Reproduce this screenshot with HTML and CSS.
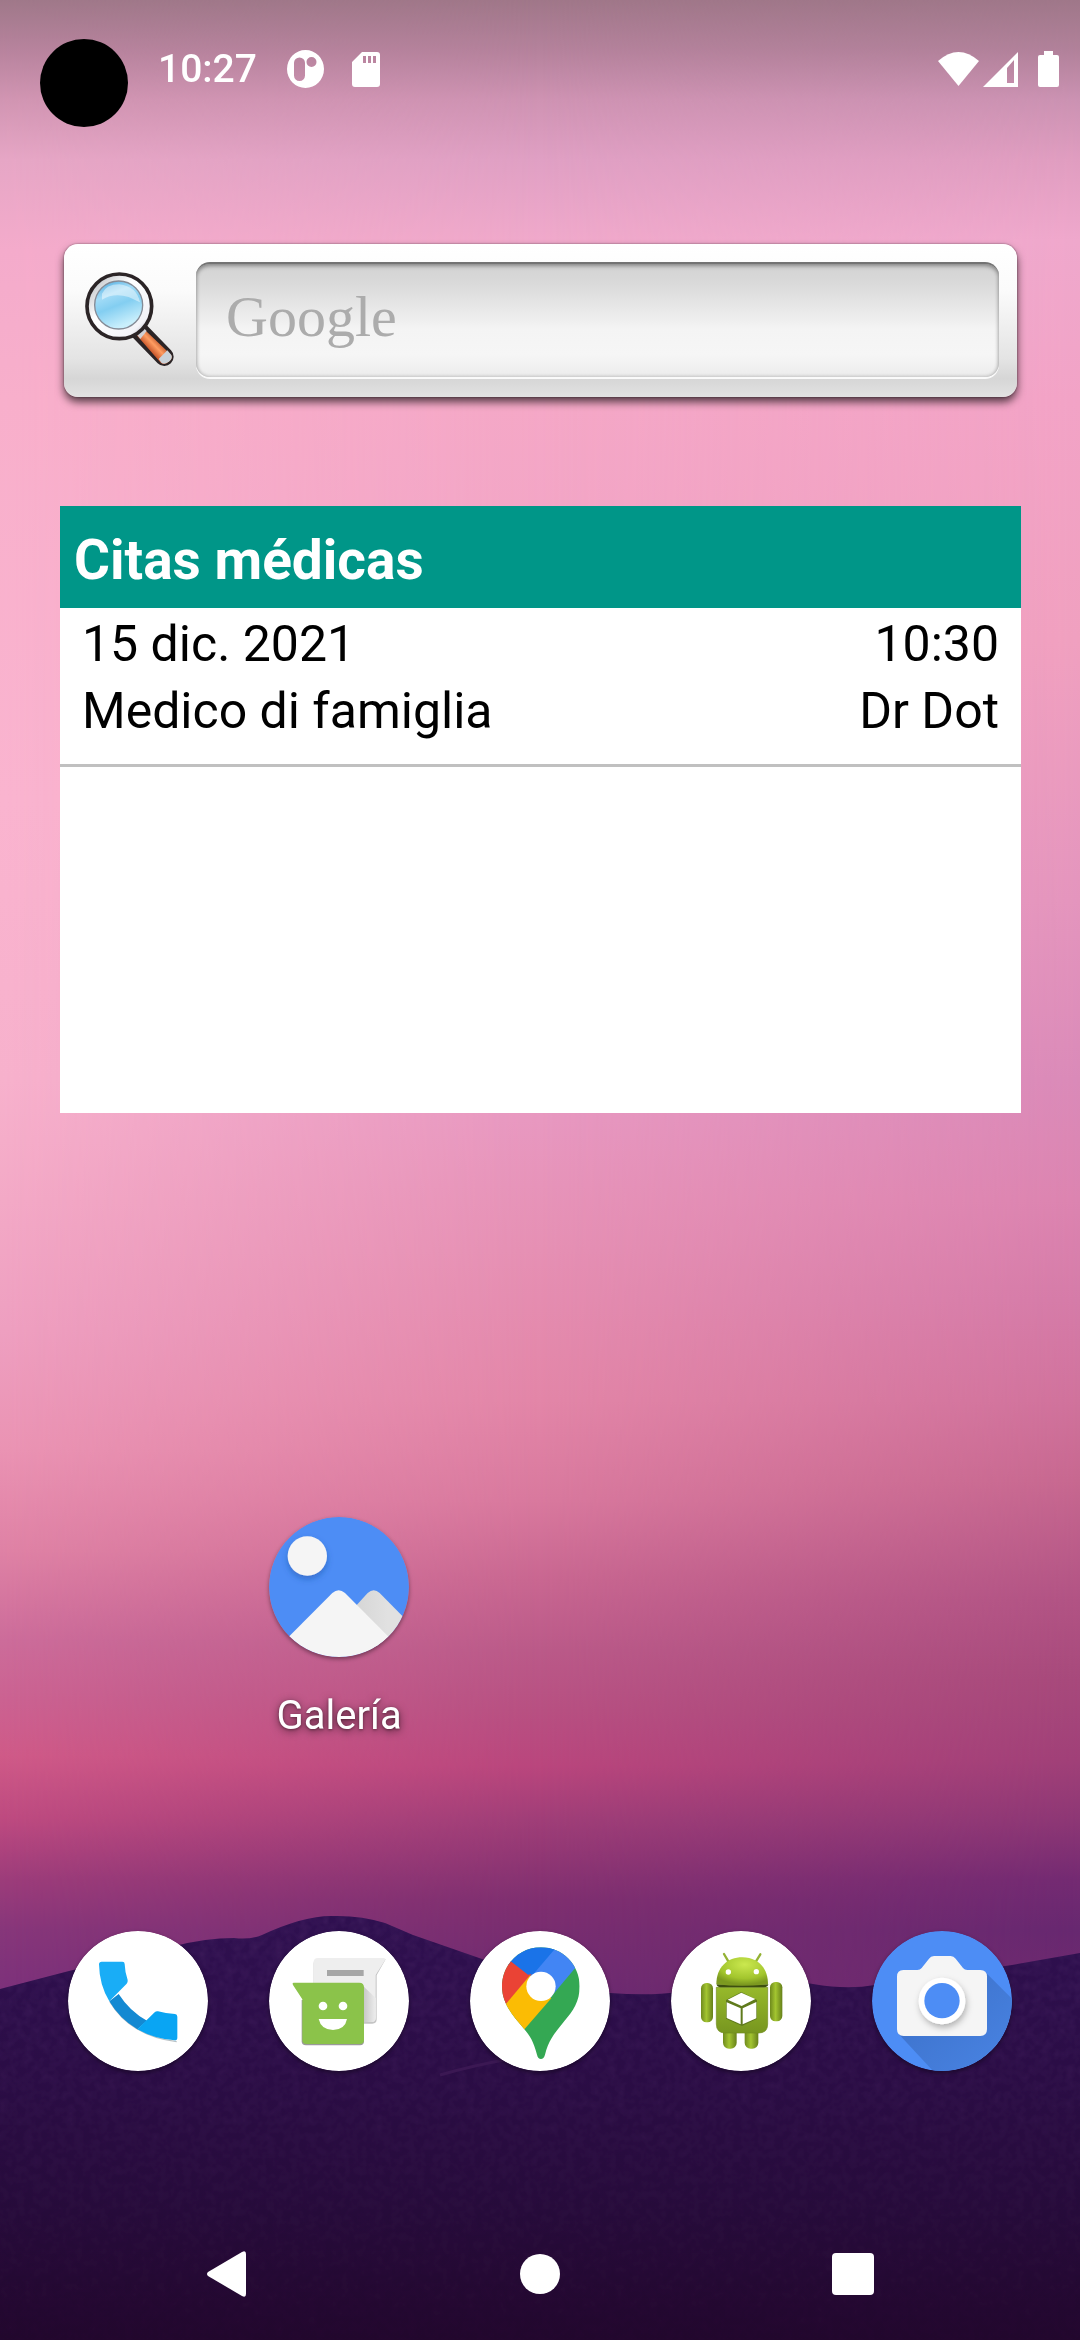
FILE: index.html
```html
<!DOCTYPE html>
<html lang="es">
<head>
<meta charset="utf-8">
<meta name="viewport" content="width=device-width, initial-scale=1">
<title>Inicio</title>
<link rel="stylesheet" href="styles.css">
</head>
<body>
<svg class="wallpaper" viewBox="0 0 1080 2340" preserveAspectRatio="none" aria-hidden="true">
  <defs>
    <linearGradient id="skyLeft" gradientUnits="userSpaceOnUse" x1="0" y1="0" x2="0" y2="2000">
      <stop offset="0" stop-color="#9f7889"/><stop offset=".025" stop-color="#b7839d"/><stop offset=".05" stop-color="#d195b2"/><stop offset=".08" stop-color="#e6a6c5"/><stop offset=".125" stop-color="#f4abcb"/><stop offset=".2" stop-color="#f8afcb"/><stop offset=".4" stop-color="#fab4cf"/><stop offset=".54" stop-color="#f7b1cc"/><stop offset=".6" stop-color="#f3a9c6"/><stop offset=".665" stop-color="#ee9fc0"/><stop offset=".725" stop-color="#ea93b3"/><stop offset=".775" stop-color="#df82a5"/><stop offset=".82" stop-color="#cc6c9a"/><stop offset=".85" stop-color="#cb6291"/><stop offset=".878" stop-color="#cf5a88"/><stop offset=".91" stop-color="#bd4a80"/><stop offset=".94" stop-color="#9c3c7a"/><stop offset=".965" stop-color="#87367a"/><stop offset="1" stop-color="#7a307a"/>
    </linearGradient>
    <linearGradient id="skyMiddle" gradientUnits="userSpaceOnUse" x1="0" y1="0" x2="0" y2="2000">
      <stop offset="0" stop-color="#a07789"/><stop offset=".025" stop-color="#b5829c"/><stop offset=".05" stop-color="#cf93b3"/><stop offset=".08" stop-color="#e0a0c4"/><stop offset=".12" stop-color="#f0a9cb"/><stop offset=".2" stop-color="#f5a8c7"/><stop offset=".4" stop-color="#efa0c4"/><stop offset=".56" stop-color="#e898c0"/><stop offset=".625" stop-color="#e690b4"/><stop offset=".7" stop-color="#e386a8"/><stop offset=".75" stop-color="#d9799e"/><stop offset=".79" stop-color="#c96791"/><stop offset=".825" stop-color="#bb5a89"/><stop offset=".855" stop-color="#b85082"/><stop offset=".883" stop-color="#ba467d"/><stop offset=".91" stop-color="#a03e78"/><stop offset=".95" stop-color="#7f2f70"/><stop offset="1" stop-color="#6b2a70"/>
    </linearGradient>
    <linearGradient id="skyRight" gradientUnits="userSpaceOnUse" x1="0" y1="0" x2="0" y2="2000">
      <stop offset="0" stop-color="#9f7789"/><stop offset=".025" stop-color="#b1819a"/><stop offset=".05" stop-color="#cb92b2"/><stop offset=".08" stop-color="#e09dc0"/><stop offset=".12" stop-color="#efa8cc"/><stop offset=".2" stop-color="#f2a3c6"/><stop offset=".32" stop-color="#f0a0bf"/><stop offset=".45" stop-color="#e495bd"/><stop offset=".54" stop-color="#da8ab8"/><stop offset=".6" stop-color="#dc84b0"/><stop offset=".65" stop-color="#d57ba8"/><stop offset=".7" stop-color="#d0729c"/><stop offset=".74" stop-color="#c76890"/><stop offset=".8" stop-color="#b15384"/><stop offset=".84" stop-color="#a7497b"/><stop offset=".88" stop-color="#a04078"/><stop offset=".91" stop-color="#8d3775"/><stop offset=".94" stop-color="#732a72"/><stop offset=".965" stop-color="#672870"/><stop offset="1" stop-color="#702a6e"/>
    </linearGradient>
    <linearGradient id="fadeOut"><stop offset="0" stop-color="#fff"/><stop offset="1" stop-color="#fff" stop-opacity="0"/></linearGradient>
    <linearGradient id="fadeIn"><stop offset="0" stop-color="#fff" stop-opacity="0"/><stop offset="1" stop-color="#fff"/></linearGradient>
    <mask id="maskLeft" maskUnits="userSpaceOnUse" x="0" y="0" width="540" height="2340"><rect width="540" height="2340" fill="url(#fadeOut)"/></mask>
    <mask id="maskRight" maskUnits="userSpaceOnUse" x="540" y="0" width="540" height="2340"><rect x="540" width="540" height="2340" fill="url(#fadeIn)"/></mask>
    <linearGradient id="hills" gradientUnits="userSpaceOnUse" x1="0" y1="1916" x2="0" y2="2340">
      <stop offset="0" stop-color="#2f1050"/><stop offset=".35" stop-color="#2b0d46"/><stop offset=".7" stop-color="#260b3a"/><stop offset="1" stop-color="#22072d"/>
    </linearGradient>
    <filter id="grain" x="0" y="0" width="1" height="1">
      <feTurbulence type="fractalNoise" baseFrequency=".12" numOctaves="2" seed="4"/>
      <feColorMatrix values="0 0 0 0 .3  0 0 0 0 .12  0 0 0 0 .4  .9 0 0 0 -.3"/>
      <feComposite in2="SourceGraphic" operator="in"/>
    </filter>
    <linearGradient id="grainFade" x1="0" y1="0" x2="0" y2="1"><stop offset="0" stop-color="#fff" stop-opacity=".22"/><stop offset="1" stop-color="#fff" stop-opacity=".03"/></linearGradient>
    <path id="ridge" d="M0 1989L69 1971L175 1946Q206 1938 234 1938Q250 1940 262 1935Q303 1916 331 1916Q360 1915 385 1923L413 1935L482 1959Q550 1990 610 1993Q650 1996 678 1992Q740 1972 813 1984Q847 1990 875 1985L1012 1965L1080 1953V2340H0Z"/>
  </defs>
  <rect width="1080" height="2340" fill="url(#skyMiddle)"/>
  <rect width="540" height="2340" fill="url(#skyLeft)" mask="url(#maskLeft)"/>
  <rect x="540" width="540" height="2340" fill="url(#skyRight)" mask="url(#maskRight)"/>
  <use href="#ridge" fill="url(#hills)"/>
  <use href="#ridge" fill="url(#grainFade)" filter="url(#grain)"/>
  <path d="M440 2075Q475 2065 510 2059" fill="none" stroke="#3b1853" stroke-width="3"/>
</svg>

<div class="phone">
  <header class="status">
    <span class="cutout"></span>
    <div class="status-group">
      <time class="clock" datetime="10:27">10:27</time>
      <svg width="37" height="38" viewBox="0 0 37 38" aria-hidden="true"><path fill="#fff" fill-rule="evenodd" d="M18.500 0a18.500 19 0 1 0 0 38a18.500 19 0 1 0 0-38ZM12.500 7.500a5.500 5.500 0 0 1 5.500 5.500v12.500a5.500 5.500 0 0 1-11 0V13a5.500 5.500 0 0 1 5.500-5.500ZM24.500 7a5 5 0 1 1 0 10a5 5 0 1 1 0-10Z"/></svg>
      <svg width="28" height="35" viewBox="0 0 28 35" aria-hidden="true"><path fill="#fff" fill-rule="evenodd" d="M10 0H25Q28 0 28 3V32Q28 35 25 35H3Q0 35 0 32V10ZM11 4V11H14V4ZM16 4V11H19V4ZM21 4V11H24V4Z"/></svg>
    </div>
    <div class="status-group status-end">
      <svg width="41" height="34" viewBox="0 0 41 34" aria-hidden="true"><path fill="#fff" d="M0 9Q20.500-9 41 9L20.500 34Z"/></svg>
      <svg width="35" height="35" viewBox="0 0 35 35" aria-hidden="true"><path fill="#fff" fill-rule="evenodd" d="M35 0V35H0ZM24 16V31H31V8Z"/></svg>
      <svg class="battery" width="21" height="36" viewBox="0 0 21 36" aria-hidden="true"><path fill="#fff" d="M6 0H15V4H19Q21 4 21 6V34Q21 36 19 36H2Q0 36 0 34V6Q0 4 2 4H6Z"/></svg>
    </div>
  </header>

  <main class="desk">
    <form class="search">
      <label class="search-icon" for="query" aria-label="Buscar">
        <svg width="92" height="98" viewBox="134 154 276 294" aria-hidden="true">
          <defs>
            <linearGradient id="lens" x1="0" y1="0" x2=".4" y2="1"><stop offset="0" stop-color="#3fa3dc"/><stop offset=".35" stop-color="#a4dcf7"/><stop offset=".6" stop-color="#83cef1"/><stop offset="1" stop-color="#c9effc"/></linearGradient>
            <linearGradient id="ring" x1="0" y1="0" x2="1" y2="1"><stop offset="0" stop-color="#aeb2b8"/><stop offset=".4" stop-color="#fff"/><stop offset=".8" stop-color="#f3f3f8"/><stop offset="1" stop-color="#85869a"/></linearGradient>
            <linearGradient id="grip" gradientUnits="userSpaceOnUse" x1="325" y1="395" x2="365" y2="357"><stop offset="0" stop-color="#b8421b"/><stop offset=".5" stop-color="#ff9d62"/><stop offset="1" stop-color="#a63c18"/></linearGradient>
          </defs>
          <path d="M300 334L375 411" stroke="#2b2426" stroke-width="56" stroke-linecap="round"/>
          <path d="M308 323L395 405Q402 414 390 425Q376 438 364 429L289 343Z" fill="url(#grip)"/>
          <path d="M289 340L308 320L322 334L303 358Z" fill="#cfd0d6"/>
          <path d="M358 418L384 392L396 406Q401 415 390 425Q376 437 366 429Z" fill="#c9d2d9"/>
          <circle cx="240" cy="260" r="97" fill="url(#ring)" stroke="#2b2426" stroke-width="11"/>
          <circle cx="238" cy="256" r="72" fill="url(#lens)" stroke="#858b96" stroke-width="4"/>
          <path d="M188 222Q200 194 240 194Q292 200 302 248Q280 238 268 232Q224 218 188 240Z" fill="#fff" opacity=".45"/>
        </svg>
      </label>
      <input id="query" class="search-box" type="text" placeholder="Google">
    </form>

    <section class="agenda">
      <h1 class="agenda-title">Citas médicas</h1>
      <ul class="agenda-list">
        <li class="visit">
          <span>15 dic. 2021</span><span>10:30</span>
          <span>Medico di famiglia</span><span>Dr Dot</span>
        </li>
      </ul>
    </section>
  </main>

  <div class="app-row">
    <a class="app app-gallery" href="#galeria">
      <svg class="app-icon" viewBox="88 80 420 420" aria-hidden="true">
        <defs>
          <clipPath id="galleryDisc"><circle cx="298" cy="290" r="210"/></clipPath>
          <linearGradient id="farPeak" x1="0" y1="0" x2="1" y2="0"><stop offset="0" stop-color="#d0d0d0"/><stop offset=".6" stop-color="#e1e1e1"/></linearGradient>
          <filter id="sunShade" x="-50%" y="-50%" width="200%" height="200%"><feDropShadow dx="0" dy="10" stdDeviation="9" flood-color="#174a9c" flood-opacity=".45"/></filter>
        </defs>
        <g clip-path="url(#galleryDisc)">
          <path fill="#4d8df5" d="M88 80H508V500H88Z"/>
          <circle cx="203" cy="197" r="59" fill="#f5f5f5" filter="url(#sunShade)"/>
          <path fill="url(#farPeak)" d="M300 400L384 308Q402 291 420 308L540 430V500H400Z"/>
          <path fill="#f5f5f5" d="M110 477L278 308Q297 291 316 308L484 477V520H110Z"/>
        </g>
      </svg>
      <span class="app-name">Galería</span>
    </a>
  </div>

  <nav class="app-row dock" aria-label="Favoritos">
    <a class="app" href="#telefono" aria-label="Teléfono">
      <svg class="app-icon" viewBox="54 93 420 420" aria-hidden="true">
        <circle cx="264" cy="303" r="210" fill="#fff"/>
        <path d="M180 306Q242 408 380 425" fill="none" stroke="#9aa5aa" stroke-width="4" opacity=".7"/>
        <path fill="#1489d2" d="M178 304L206 282Q240 335 291 362L262 388Q208 356 178 304Z"/>
        <path fill="#19adf6" d="M155 185H217Q224 185 224 192Q225 218 233 240Q234 246 230 251L178 304Q148 255 147 193Q147 185 155 185Z"/>
        <path fill="#09a5f3" d="M262 388L314 337Q318 333 324 334Q346 341 375 342Q382 343 382 350V413Q382 421 374 421Q314 417 262 388Z"/>
      </svg>
    </a>
    <a class="app" href="#mensajes" aria-label="Mensajes">
      <svg class="app-icon" viewBox="657 93 420 420" aria-hidden="true">
        <defs><linearGradient id="bubbleShade" x1="0" y1="0" x2="1" y2="0"><stop offset="0" stop-color="#bcbcbc"/><stop offset="1" stop-color="#ededed"/></linearGradient></defs>
        <circle cx="867" cy="303" r="210" fill="#fff"/>
        <path fill="#c4c4c4" d="M804 178H1007L980 226V358Q980 371 967 371H804Q791 371 791 358V190Q791 178 804 178Z"/>
        <path fill="#eee" d="M804 174H1000Q1008 174 1005 181L977 225V354Q977 366 965 366H804Q791 366 791 354V187Q791 174 804 174Z"/>
        <path fill="url(#bubbleShade)" d="M930 249L977 294V354Q977 366 965 366H938Z"/>
        <path fill="#a6a6a6" d="M831 210H941V228H831Z"/>
        <path fill="#9a9a9a" d="M755 300H942V424Q942 436 930 436H768Q755 436 755 424Z"/>
        <path fill="#8bc34a" d="M731 248H928Q942 248 942 262V419Q942 432 929 432H770Q757 432 757 419V298L729 255Q726 248 731 248Z"/>
        <circle cx="819" cy="318" r="13" fill="#fff"/><circle cx="879" cy="318" r="13" fill="#fff"/>
        <path fill="#fff" d="M806 357H891Q885 389 849 390Q813 389 806 357Z"/>
      </svg>
    </a>
    <a class="app" href="#mapas" aria-label="Mapas">
      <svg class="app-icon" viewBox="90 93 420 420" aria-hidden="true">
        <defs><clipPath id="pin"><path d="M303 142C367 142 419 193 419 259C419 305 399 333 375 361C339 405 325 424 315 464Q311 477 303 477Q294 477 291 464C280 424 271 408 250 384C222 350 186 313 186 259C186 193 239 142 303 142Z"/></clipPath></defs>
        <circle cx="300" cy="303" r="210" fill="#fff"/>
        <g clip-path="url(#pin)">
          <path fill="#34a853" d="M180 130H430V490H180Z"/>
          <path fill="#4285f4" d="M342 142L430 130V175L303 326L240 260Z"/>
          <path fill="#1a73e8" d="M186 130H359L262 244L200 190Z"/>
          <path fill="#ea4335" d="M186 160L215 186L264 224L275 222L170 347V160Z"/>
          <path fill="#fbbc04" d="M196 314L270 226L334 295L252 389H180Z"/>
          <circle cx="303" cy="259" r="44" fill="#fff"/>
        </g>
      </svg>
    </a>
    <a class="app" href="#android" aria-label="Android">
      <svg class="app-icon" viewBox="693 93 420 420" aria-hidden="true">
        <defs>
          <linearGradient id="bodyGreen" x1="0" y1="0" x2="0" y2="1"><stop offset="0" stop-color="#97b92b"/><stop offset="1" stop-color="#77961f"/></linearGradient>
          <linearGradient id="limbGreen" x1="0" y1="0" x2="1" y2="0"><stop offset="0" stop-color="#6f8a1d"/><stop offset=".45" stop-color="#a3c530"/><stop offset="1" stop-color="#66801a"/></linearGradient>
          <radialGradient id="headGreen" cx=".55" cy=".25" r=".7"><stop offset="0" stop-color="#cbe84f"/><stop offset=".7" stop-color="#a2c52d"/><stop offset="1" stop-color="#7c9a20"/></radialGradient>
        </defs>
        <circle cx="903" cy="303" r="210" fill="#fff"/>
        <path d="M852 162L865 184M961 163L948 184" stroke="#94b234" stroke-width="7" stroke-linecap="round"/>
        <rect x="849" y="375" width="41" height="71" rx="18" fill="url(#limbGreen)"/>
        <rect x="914" y="375" width="41" height="71" rx="18" fill="url(#limbGreen)"/>
        <rect x="783" y="249" width="36" height="118" rx="16" fill="url(#limbGreen)"/>
        <rect x="990" y="246" width="37" height="118" rx="16" fill="url(#limbGreen)"/>
        <path fill="url(#bodyGreen)" stroke="#718d20" stroke-width="2" d="M829 262H983V372Q983 399 956 399H856Q829 399 829 372Z"/>
        <path fill="#3e500f" d="M830 253H985Q984 261 972 262H842Q830 261 830 253Z"/>
        <path fill="url(#headGreen)" d="M829 253C829 202 862 172 907 172C952 172 984 202 984 253Q907 262 829 253Z"/>
        <circle cx="865" cy="216" r="8" fill="#fff"/><circle cx="949" cy="215" r="8" fill="#fff"/>
        <path fill="#5f7a1c" d="M858 300L904 276L951 300V356L906 378L858 356Z"/>
        <path fill="#fff" d="M863 299L904 278L946 297L905 318ZM860 307L902 325V373L860 354ZM908 325L949 306V355L908 373Z"/>
      </svg>
    </a>
    <a class="app" href="#camara" aria-label="Cámara">
      <svg class="app-icon" viewBox="96 93 420 420" aria-hidden="true">
        <defs>
          <clipPath id="cameraDisc"><circle cx="306" cy="303" r="210"/></clipPath>
          <linearGradient id="cameraShade" x1="0" y1="0" x2="1" y2="1"><stop offset=".3" stop-color="#3f75cf"/><stop offset="1" stop-color="#4a85e5"/></linearGradient>
          <filter id="ringShade" x="-30%" y="-30%" width="160%" height="170%"><feDropShadow dx="4" dy="10" stdDeviation="9" flood-color="#000" flood-opacity=".28"/></filter>
        </defs>
        <g clip-path="url(#cameraDisc)">
          <path fill="#4d8df5" d="M96 93H516V513H96Z"/>
          <path fill="url(#cameraShade)" d="M435 215L530 310V530H295L176 402Z"/>
          <path fill="#f5f5f5" d="M190 210H232Q240 210 245 204L267 176Q272 168 282 168H332Q341 168 347 176L369 204Q374 210 382 210H421Q441 210 441 230V388Q441 408 421 408H191Q171 408 171 388V230Q171 210 190 210Z"/>
          <circle cx="306" cy="303" r="70" fill="#fff" filter="url(#ringShade)"/>
          <circle cx="306" cy="302" r="53" fill="#4d8df5"/>
        </g>
      </svg>
    </a>
  </nav>

  <footer class="system-nav">
    <button class="nav-key" type="button" aria-label="Atrás"><svg width="40" height="46" viewBox="0 0 40 46" aria-hidden="true"><path fill="#fff" d="M1 21L35 1Q39-1 39 3V43Q39 47 35 45L1 25Q-1 23 1 21Z"/></svg></button>
    <button class="nav-key" type="button" aria-label="Inicio"><svg width="40" height="40" viewBox="0 0 40 40" aria-hidden="true"><circle cx="20" cy="20" r="20" fill="#fff"/></svg></button>
    <button class="nav-key" type="button" aria-label="Recientes"><svg width="42" height="42" viewBox="0 0 42 42" aria-hidden="true"><rect width="42" height="42" rx="4" fill="#fff"/></svg></button>
  </footer>
</div>
</body>
</html>
```
FILE: styles.css
```css
* {
  box-sizing: border-box;
}

body {
  margin: 0;
  background: #22072d;
  color: #fff;
  font-family: Roboto, "Noto Sans", sans-serif;
}

svg {
  display: block;
}

.wallpaper {
  position: fixed;
  inset: 0;
  width: 100%;
  height: 100%;
  z-index: -1;
}

.phone {
  display: flex;
  flex-direction: column;
  min-height: 100vh;
}

/* Status bar */

.status {
  display: flex;
  align-items: flex-start;
  gap: 30px;
  padding: 39px 21px 0 40px;
}

.cutout {
  width: 88px;
  height: 88px;
  border-radius: 50%;
  background: #000;
}

.status-group {
  display: flex;
  align-items: center;
  gap: 28px;
  height: 60px;
}

.status-end {
  gap: 4px;
  margin-left: auto;
}

.clock {
  margin-right: 2px;
  font-size: 39px;
  font-weight: 500;
  line-height: 48px;
}

.battery {
  margin-left: 16px;
}

/* Widgets */

.desk {
  display: flex;
  flex-direction: column;
  flex: 1;
  gap: 109px;
  padding: 117px 59px 40px 60px;
}

.search {
  display: flex;
  margin: 0 4px;
  padding: 18px 18px 20px 0;
  border-radius: 14px;
  background: linear-gradient(#fff, #fbfbfb 30%, #e4e4e4 75%, #d6d6d6 88%, #e2e2e2);
  box-shadow: 0 0 2px rgba(0, 0, 0, .5), 0 5px 9px rgba(0, 0, 0, .65);
}

.search-icon {
  width: 132px;
  padding: 9px 0 0 20px;
}

.search-box {
  flex: 1;
  min-width: 0;
  height: 115px;
  padding: 0 30px 8px;
  border: 0;
  border-top: 2px solid #737373;
  border-radius: 14px;
  background: linear-gradient(#d2d2d2, #dadada 18%, #f4f4f4 58%, #f6f6f6 80%, #ececec);
  box-shadow: inset 0 2px 4px rgba(0, 0, 0, .3), inset 0 0 4px rgba(0, 0, 0, .2), 0 2px 0 #fafafa;
  color: #555;
  font-family: "Liberation Serif", serif;
  font-size: 58px;
}

.search-box::placeholder {
  color: #acacac;
  opacity: 1;
}

.agenda {
  min-height: 607px;
  background: #fff;
  color: #000;
}

.agenda-title {
  margin: 0;
  padding: 22px 14px 16px;
  background: #009688;
  color: #fff;
  font-size: 55px;
  font-weight: 700;
  line-height: 64px;
}

.agenda-list {
  margin: 0;
  padding: 0;
  list-style: none;
}

.visit {
  display: grid;
  grid-template-columns: 1fr auto;
  padding: 3px 22px 19px;
  border-bottom: 3px solid #c0c0c0;
  font-size: 50px;
  line-height: 67px;
}

.visit span:nth-child(even) {
  text-align: right;
}

/* App shortcuts */

.app-row {
  display: grid;
  grid-template-columns: repeat(5, 1fr);
  padding: 0 38px;
}

.app {
  display: flex;
  flex-direction: column;
  align-items: center;
  gap: 35px;
  color: #fff;
  text-decoration: none;
}

.app-gallery {
  grid-column: 2;
}

.app-icon {
  width: 140px;
  height: 140px;
  border-radius: 50%;
  box-shadow: 0 2px 4px rgba(0, 0, 0, .4);
}

.app-name {
  font-size: 40px;
  line-height: 48px;
  text-shadow: 0 1px 3px rgba(0, 0, 0, .4), 0 2px 8px rgba(0, 0, 0, .6);
}

.dock {
  padding-top: 191px;
  padding-bottom: 137px;
}

/* System navigation */

.system-nav {
  display: grid;
  grid-template-columns: repeat(3, 1fr);
  height: 132px;
  padding: 0 71px;
}

.nav-key {
  display: flex;
  align-items: center;
  justify-content: center;
  padding: 0;
  border: 0;
  background: none;
}
```
